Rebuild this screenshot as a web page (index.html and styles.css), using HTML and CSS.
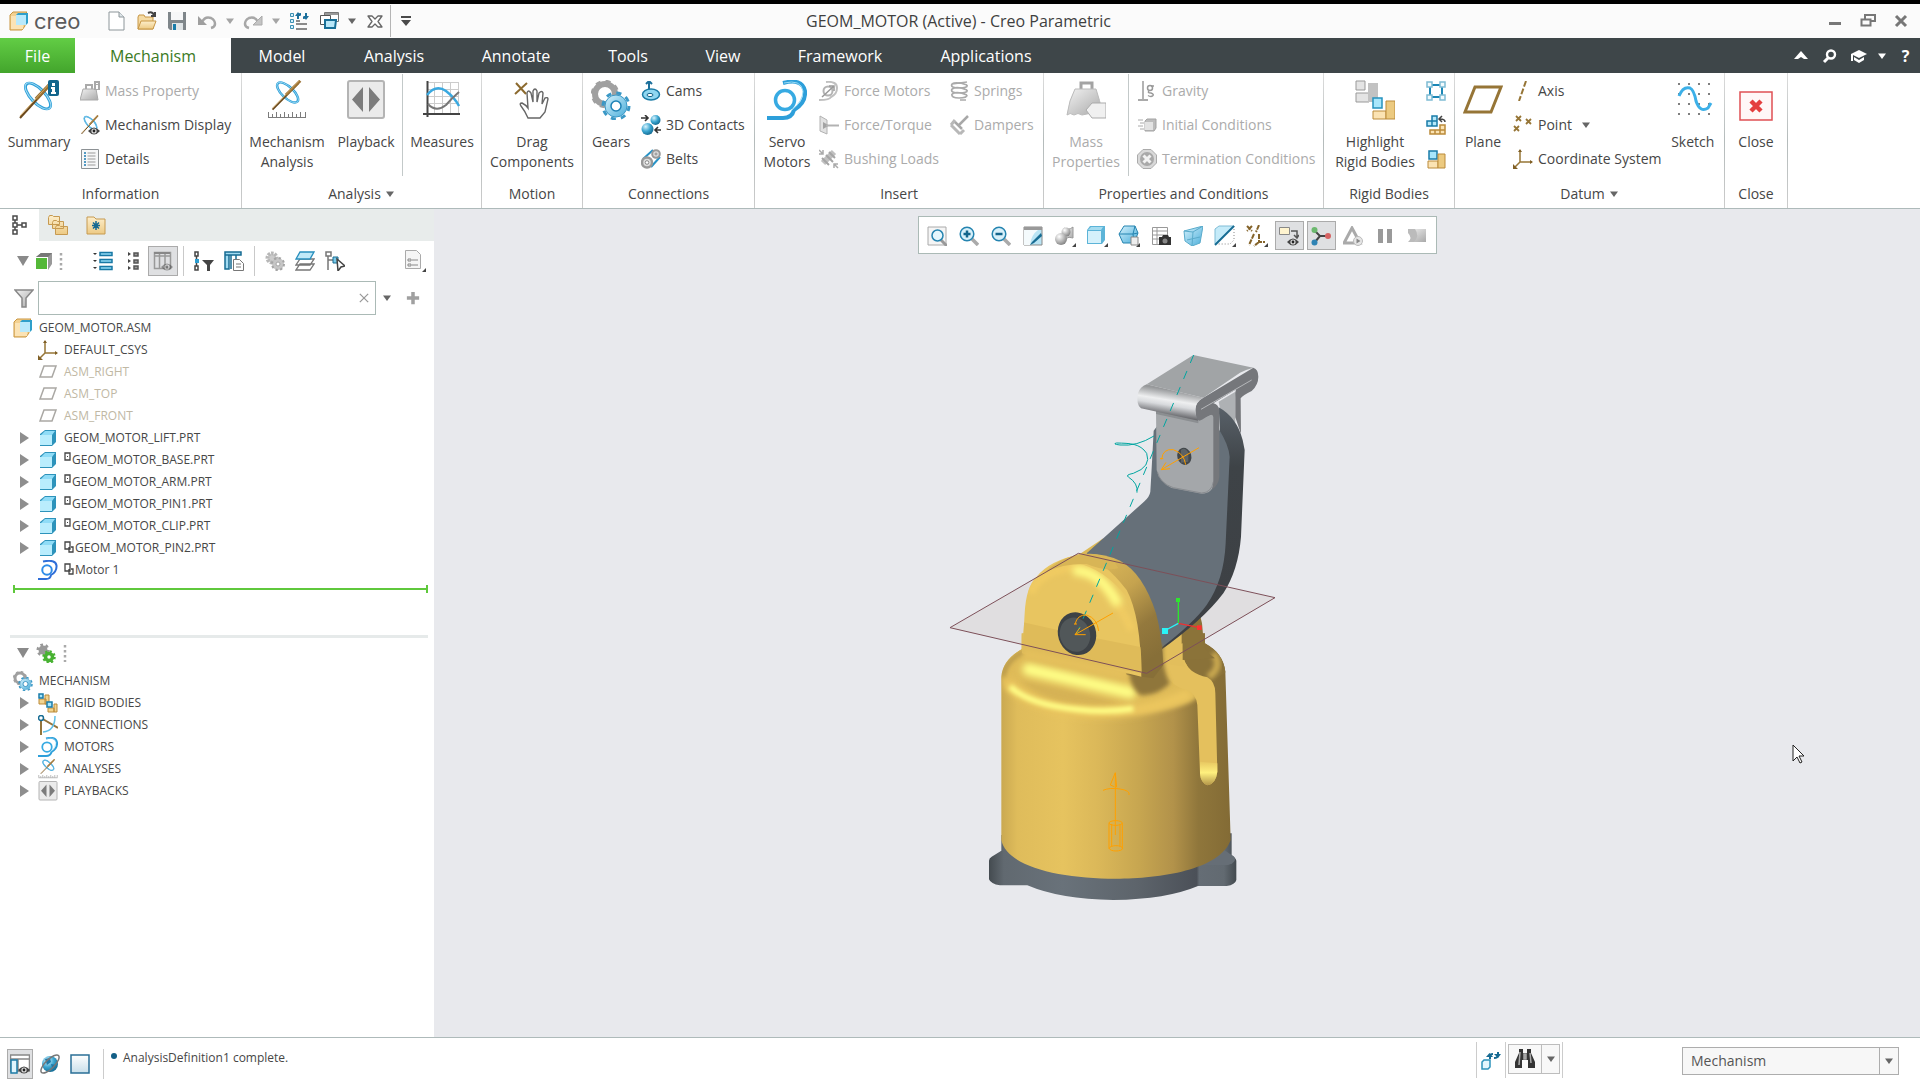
FILE: index.html
```html
<!DOCTYPE html>
<html lang="en">
<head>
<meta charset="utf-8">
<title>GEOM_MOTOR (Active) - Creo Parametric</title>
<link rel="stylesheet" href="styles.css">
</head>
<body>
<svg class="sprite" aria-hidden="true">
  <defs>
    <linearGradient id="gBlue" x1="0" y1="0" x2="1" y2="1"><stop offset="0" stop-color="#d5f1fc"/><stop offset="1" stop-color="#4aaeda"/></linearGradient>
    <linearGradient id="gGray" x1="0" y1="0" x2="1" y2="1"><stop offset="0" stop-color="#f2f2f2"/><stop offset="1" stop-color="#a9a9a9"/></linearGradient>
    <linearGradient id="gFolder" x1="0" y1="0" x2="0" y2="1"><stop offset="0" stop-color="#fdeecb"/><stop offset="1" stop-color="#edca84"/></linearGradient>
    <radialGradient id="gBall" cx=".35" cy=".3" r=".8"><stop offset="0" stop-color="#d8f3fd"/><stop offset=".5" stop-color="#3aa5d0"/><stop offset="1" stop-color="#0c5f86"/></radialGradient>
    <radialGradient id="gBallGray" cx=".35" cy=".3" r=".8"><stop offset="0" stop-color="#fff"/><stop offset="1" stop-color="#777"/></radialGradient>
  </defs>

  <symbol id="brand" viewBox="0 0 20 20"><path d="M1 4l3-3h14l-2 2v12l-3 4H1z" fill="#f3d191" stroke="#c9953f"/><path d="M2 5h12v13H2z" fill="#fbe3b5"/><path d="M7 4l2-2h10v10l-2 2H7z" fill="#2f9fca"/><path d="M7 4h10v10H7z" fill="#b9e9fb"/></symbol>
  <symbol id="new" viewBox="0 0 20 20"><path d="M2 1h10l5 5v13H2z" fill="#fff" stroke="#8d969a"/><path d="M12 1v5h5" fill="#dfe6e9" stroke="#8d969a"/></symbol>
  <symbol id="open" viewBox="0 0 20 20"><path d="M1 6l1-2h5l1 2h8v12H1z" fill="#f5dba4" stroke="#c79645"/><path d="M4 10h15l-3 8H1z" fill="url(#gFolder)" stroke="#c79645"/><path d="M11 2q4-2 6 2M18 1v4h-4" fill="none" stroke="#444" stroke-width="2"/></symbol>
  <symbol id="save" viewBox="0 0 20 20"><path d="M1 1h18v18H3l-2-2z" fill="#7f868a"/><path d="M4 1h12v8H4z" fill="#f6f7f8"/><path d="M5 12h11v7H5z" fill="#dfe4e6"/><path d="M6 13h3v6H6z" fill="#177ba8"/></symbol>
  <symbol id="undo" viewBox="0 0 20 20"><path d="M5 11q3-6 9-4 4 2 4 6 0 3-4 4" fill="none" stroke="#a5a5a5" stroke-width="2.500"/><path d="M1 5v9h9z" fill="#9f9f9f"/></symbol>
  <symbol id="redo" viewBox="0 0 20 20"><path d="M15 11q-3-6-9-4-4 2-4 6 0 3 4 4" fill="none" stroke="#a8a8a8" stroke-width="2.500"/><path d="M19 5v9h-9z" fill="#c4c4c4" stroke="#aaa"/></symbol>
  <symbol id="regen" viewBox="0 0 20 20"><path d="M1.500 2.500h3v3h-3zM1.500 8.500h3v3h-3zM1.500 14.500h3v3h-3z" fill="#d5f1fc" stroke="#3b8fb3"/><path d="M7 10h4M7 13h11M7 18h11" stroke="#8b8b8b" stroke-width="2"/><path d="M9 8V5q0-2 3-2M17 2v3q0 2-3 2" fill="none" stroke="#1b6f9b" stroke-width="2"/><path d="M6 5h6L9 1zM14 5h6l-3 4z" fill="#1b6f9b"/></symbol>
  <symbol id="windows" viewBox="0 0 20 20"><path d="M5.500 1.500h14v9h-14z" fill="#fff" stroke="#777"/><path d="M6 3h13" stroke="#999" stroke-width="2"/><path d="M1.500 4.500h10v9h-10z" fill="#fff" stroke="#555"/><path d="M6 9h11l-1 8H6z" fill="#b9e7f8" stroke="#176e97" stroke-width="2"/></symbol>
  <symbol id="closewin" viewBox="0 0 20 20"><path d="M3 5h4l3 3 3-3h4l-4 5.500 4 5.500h-4l-3-3-3 3H3l4-5.500z" fill="#fff" stroke="#666" stroke-width="1.300" stroke-linejoin="round"/></symbol>
  <symbol id="caret" viewBox="0 0 10 10"><path d="M1 2.500h8L5 8z" fill="currentColor"/></symbol>
  <symbol id="custom" viewBox="0 0 12 12"><path d="M1 1h10v2H1zM1 5h10l-5 6z" fill="#4a4a4a"/></symbol>
  <symbol id="min" viewBox="0 0 16 16"><path d="M2 9h12v3H2z" fill="#777"/></symbol>
  <symbol id="restore" viewBox="0 0 16 16"><path d="M5 6V2h10v6h-4M1.500 6.500h9v6h-9z" fill="none" stroke="#777" stroke-width="2"/></symbol>
  <symbol id="x" viewBox="0 0 16 16"><path d="M3 3l10 10M13 3L3 13" stroke="currentColor" stroke-width="3"/></symbol>
  <symbol id="up" viewBox="0 0 16 16"><path d="M1 11l7-8 7 8h-4L8 9l-3 2z" fill="#fff"/></symbol>
  <symbol id="find" viewBox="0 0 16 16"><circle cx="9" cy="6.500" r="4" fill="none" stroke="#fff" stroke-width="2.400"/><path d="M6 10l-4 4" stroke="#fff" stroke-width="3"/></symbol>
  <symbol id="cap" viewBox="0 0 16 16"><path d="M0 6l8-4 8 4-8 4z" fill="#fff"/><path d="M3 9l5 3 5-3v3l-5 3-5-3zM0 6h2v7H0z" fill="#fff"/></symbol>

  <symbol id="mech" viewBox="0 0 40 40"><ellipse cx="21" cy="16" rx="16.500" ry="7" transform="rotate(46 21 16)" fill="none" stroke="#2d9fd8" stroke-width="3"/><ellipse cx="21" cy="16" rx="17" ry="7" transform="rotate(46 21 16)" fill="none" stroke="#a4dcf4" stroke-width="1"/><path d="M34 4L3 38" stroke="#6b491c" stroke-width="2"/><path d="M36 1L19 19" stroke="#9a7032" stroke-width="3.500"/><path d="M35 1L3 36" stroke="#d0a866" stroke-width="1"/></symbol>
  <symbol id="summary" viewBox="0 0 40 40"><g transform="translate(-2 0)"><use href="#mech" width="40" height="40"/></g><rect x="29" y="0" width="11" height="16" rx="2" fill="#12658c"/><path d="M33 3h3v3h-3zM32 7h4v5h1v2h-5v-2h1V9h-1z" fill="#fff"/></symbol>
  <symbol id="mechan" viewBox="0 0 40 40"><g transform="translate(3 0) scale(.84 .78)"><use href="#mech" width="40" height="40"/></g><path d="M1 37.500h38M1.500 37v-5M5.500 37v-3M9.500 37v-5M13.500 37v-3M17.500 37v-5M21.500 37v-3M25.500 37v-5M29.500 37v-3M33.500 37v-5M38.500 37v-5" stroke="#7c7c7c" fill="none"/></symbol>
  <symbol id="eye" viewBox="0 0 12 8"><path d="M0 4q6-7 12 0-6 7-12 0z" fill="#444"/><circle cx="6" cy="4" r="2.600" fill="#ddd"/><circle cx="6" cy="4" r="1.400" fill="#222"/></symbol>
  <symbol id="mechdisp" viewBox="0 0 20 20"><use href="#mech" width="20" height="20"/><use href="#eye" x="8" y="12" width="12" height="8"/></symbol>
  <symbol id="massprop" viewBox="0 0 20 20"><path d="M3 8h13l2 11H0z" fill="url(#gGray)" stroke="#aaa"/><path d="M6 8V4h6v4" fill="none" stroke="#aaa" stroke-width="2"/><path d="M14 0h6v9h-6z" fill="#a9a9a9"/><path d="M17 2v1M17 4v4" stroke="#fff" stroke-width="2"/></symbol>
  <symbol id="details" viewBox="0 0 20 20"><path d="M1.500 .5h17v19h-17z" fill="#f6f7f8" stroke="#8c9194"/><path d="M4 4h2M4 7h2M4 10h2M4 13h2M4 16h2" stroke="#1c7bb0" stroke-width="1.500"/><path d="M7.500 4h8M7.500 7h8M7.500 10h8M7.500 13h8M7.500 16h8" stroke="#999"/></symbol>
  <symbol id="play" viewBox="0 0 40 40"><rect x="2" y="1" width="36" height="37" rx="2" fill="#ebebeb" stroke="#b4b4b4" stroke-width="2"/><path d="M17 7v25L6 19.500zM23 7v25l11-12.500z" fill="#7c7c7c"/></symbol>
  <symbol id="measures" viewBox="0 0 40 40"><path d="M6 2.500h31M6 9.500h31M6 16.500h31M6 23.500h31M12.500 2v32M20.500 2v32M28.500 2v32M36.500 2v32" stroke="#ccc"/><path d="M5.500 1v36M1 34h37" stroke="#444" stroke-width="2"/><path d="M5 15Q14 4 24 11q9 7 13 15" fill="none" stroke="#3aa9e0" stroke-width="2.500"/><path d="M6 24q8 9 18 1Q30 18 37 12" fill="none" stroke="#777" stroke-width="2"/></symbol>
  <symbol id="hand" viewBox="0 0 40 40"><path d="M4 3l10 11M15 3L3 14" stroke="#8c6a2f" stroke-width="2"/><path d="M16 38Q13 31 9 26q-2-3 1-3 4 2 6 5l-1-15q1-4 4 0l2 9V11q2-4 4 0v11l2-9q3-3 4 0l-1 11 3-6q3-1 3 1l-3 13-5 6z" fill="#fff" stroke="#666" stroke-width="1.400"/></symbol>
  <symbol id="gears" viewBox="0 0 40 40"><circle cx="14" cy="14" r="10" fill="none" stroke="#a0a0a0" stroke-width="6"/><circle cx="14" cy="14" r="12.700" fill="none" stroke="#a0a0a0" stroke-width="3" stroke-dasharray="5 5"/><circle cx="25" cy="26" r="13" fill="none" stroke="#3a98c6" stroke-width="3" stroke-dasharray="5.100 5.100"/><circle cx="25" cy="26" r="11" fill="url(#gBlue)" stroke="#3a98c6"/><circle cx="25" cy="26" r="5" fill="#fff" stroke="#1d82b5" stroke-width="1.500"/></symbol>
  <symbol id="gearsgreen" viewBox="0 0 20 20"><circle cx="7" cy="7" r="4.500" fill="#999" stroke="#999" stroke-width="4" stroke-dasharray="2.300 2.300"/><circle cx="13" cy="14" r="3.500" fill="#fff" stroke="#48b232" stroke-width="3.500"/><circle cx="13" cy="14" r="5.500" fill="none" stroke="#48b232" stroke-width="2.500" stroke-dasharray="2.150 2.150"/></symbol>
  <symbol id="gearsgray" viewBox="0 0 20 20"><circle cx="7" cy="7" r="4.500" fill="#ccc" stroke="#b7b7b7" stroke-width="4" stroke-dasharray="2.300 1"/><circle cx="13" cy="13" r="4" fill="#fff" stroke="#c6c6c6" stroke-width="4"/><circle cx="13" cy="13" r="6" fill="none" stroke="#a5a5a5" stroke-width="2" stroke-dasharray="2.350 2.350"/><circle cx="13" cy="13" r="2" fill="none" stroke="#a5a5a5"/></symbol>
  <symbol id="cams" viewBox="0 0 20 20"><path d="M8 0v9M5 3l3-3 3 3" stroke="#1b6f9b" stroke-width="2" fill="none"/><ellipse cx="10" cy="13.500" rx="8.500" ry="5.500" fill="#8fd7f1" stroke="#1b7ba6" stroke-width="1.500"/><ellipse cx="9" cy="14" rx="3" ry="1.600" fill="#fff" stroke="#156388"/></symbol>
  <symbol id="contacts" viewBox="0 0 20 20"><circle cx="14.500" cy="5" r="5" fill="url(#gBall)"/><circle cx="6.500" cy="14" r="6" fill="url(#gBall)"/><path d="M0 3h7M4 0l3 3-3 3M20 15h-6M17 12l-3 3 3 3" fill="none" stroke="#333" stroke-width="1.600"/></symbol>
  <symbol id="belts" viewBox="0 0 20 20"><path d="M2 10L12 1M10 18l9-10" stroke="#2793c7" stroke-width="2"/><circle cx="6" cy="13.500" r="5" fill="#ddd" stroke="#999" stroke-width="2.500"/><circle cx="15" cy="5" r="3.800" fill="#ddd" stroke="#999" stroke-width="2"/><circle cx="6" cy="13.500" r="1.800" fill="#fff" stroke="#888"/><circle cx="15" cy="5" r="1" fill="#fff" stroke="#888"/></symbol>
  <symbol id="servo" viewBox="0 0 40 40"><circle cx="18" cy="20" r="9.500" fill="none" stroke="#37aae2" stroke-width="3.500"/><path d="M16 3Q35-2 38 11q1 12-11 19Q25 38 16 38H0" fill="none" stroke="#2d9fda" stroke-width="4"/><path d="M17 3q17-4 19 8 0 10-11 19" fill="none" stroke="#9adcf6"/></symbol>
  <symbol id="servoBlue" viewBox="0 0 40 40"><circle cx="18" cy="20" r="9.500" fill="none" stroke="#2e8ce8" stroke-width="4"/><path d="M10 3Q35-2 37 11q1 12-11 19Q25 38 16 38H0" fill="none" stroke="#2e6ed8" stroke-width="4"/></symbol>
  <symbol id="forcemotor" viewBox="0 0 20 20"><circle cx="9" cy="10" r="4.500" fill="none" stroke="#b3b3b3" stroke-width="2"/><path d="M7 1q11-1 11 6 0 6-6 9-1 3-12 3" fill="none" stroke="#c0c0c0" stroke-width="2"/><path d="M3 16L15 5M10 5h5v5" fill="none" stroke="#999" stroke-width="1.500"/></symbol>
  <symbol id="torque" viewBox="0 0 20 20"><path d="M1 1l7 4v14l-7-3z" fill="#e2e2e2" stroke="#b2b2b2"/><path d="M4 7v7l6-3.500z" fill="#a3a3a3"/><path d="M7 10.500h13" stroke="#b2b2b2" stroke-width="2"/></symbol>
  <symbol id="bushing" viewBox="0 0 20 20"><path d="M4 14L15 3" stroke="#c0c0c0" stroke-width="6"/><path d="M3 9l7 7M7 6l7 7M10 3l6 6" stroke="#a5a5a5" stroke-width="2"/><path d="M0 1l4 4M4 1v4H0M19 19l-4-4M15 19v-4h4" fill="none" stroke="#aaa" stroke-width="1.500"/></symbol>
  <symbol id="springs" viewBox="0 0 20 20"><path d="M18 1L3 3M3 3q-2 4 7 4t8-3M3 8q-2 4 7 4t8-3M3 13q-1 4 7 4t8-3M3 3q4-3 15 1M3 8q5-3 15 1M3 13q5-3 15 1M17 19h-6" fill="none" stroke="#aaa" stroke-width="1.700"/></symbol>
  <symbol id="dampers" viewBox="0 0 20 20"><path d="M2 10l9 9M2 10l4-5M11 19l4-4" stroke="#b8b8b8" stroke-width="3" fill="none"/><path d="M6 7l7 7M10 10l9-9" stroke="#a8a8a8" stroke-width="2.500"/></symbol>
  <symbol id="masses" viewBox="0 0 40 40"><path d="M15 9V3h11v6" fill="none" stroke="#a3a3a3" stroke-width="3"/><path d="M9 9h21q4 12 6 22l-20 4q-4-3-8 0-4-3-7 0Q3 20 9 9z" fill="url(#gGray)" stroke="#bbb"/><path d="M20 30l6-7h14v15H26z" fill="#f0f0f0" stroke="#ababab"/></symbol>
  <symbol id="gravity" viewBox="0 0 20 20"><path d="M6 0v18" stroke="#b3b3b3" stroke-width="2"/><path d="M1 19h10" stroke="#aaa" stroke-width="2"/><circle cx="13" cy="7" r="2.500" fill="none" stroke="#999" stroke-width="1.500"/><path d="M14 5h3M12 10q-2 2 2 2 3 1 2 2.500-2 2-5 0" fill="none" stroke="#999" stroke-width="1.500"/></symbol>
  <symbol id="initial" viewBox="0 0 20 20"><path d="M1 5h5M3 8h4M1 11h5M3 14h4" stroke="#aaa"/><path d="M8 6l2-2h9v9l-2 3H8z" fill="#bcbcbc" stroke="#a3a3a3"/><path d="M8 7h8v8H8z" fill="#e3e3e3"/></symbol>
  <symbol id="term" viewBox="0 0 20 20"><path d="M6 .5h8L19.500 6v8L14 19.500H6L.5 14V6z" fill="#d9d9d9" stroke="#ababab"/><circle cx="10" cy="10" r="7" fill="#a9a9a9"/><path d="M6.500 6.500l7 7M13.500 6.500l-7 7" stroke="#f2f2f2" stroke-width="3"/></symbol>
  <symbol id="rigid" viewBox="0 0 40 40"><path d="M1 1h9v9H1zM1 13h13v9H1z" fill="#e4e4e4" stroke="#999"/><path d="M13 3h10v19H13z" fill="#c2c2c2"/><path d="M18 18h9v10h-9z" fill="#a8e6fb" stroke="#2592bf" stroke-width="1.500"/><path d="M18 31h13v8H18z" fill="#fbe3b3" stroke="#bb8b3a"/><path d="M31 21h9v18h-9z" fill="#ecca80" stroke="#bb8b3a"/></symbol>
  <symbol id="rb1" viewBox="0 0 20 20"><path d="M4 4h12v12H4z" fill="none" stroke="#1c87b6" stroke-width="2"/><path d="M1 1h5v5H1zM14 1h5v5h-5zM1 14h5v5H1zM14 14h5v5h-5z" fill="#f2fafd" stroke="#7fbcd4" stroke-width="1.500"/></symbol>
  <symbol id="rb2" viewBox="0 0 20 20"><path d="M1 6h5v5H1zM6 6h5v5H6zM6 1h5v5H6z" fill="#b7e9fa" stroke="#1a7ca9" stroke-width="1.500"/><path d="M4 15h5v4H4zM9 15h5v4H9zM14 15h5v4h-5zM14 10h5v5h-5z" fill="#fbe3b3" stroke="#bb8b3a" stroke-width="1.500"/><path d="M19 7q0-3-5-3M16 1l-3 3 3 3" fill="none" stroke="#444" stroke-width="1.500"/></symbol>
  <symbol id="rb3" viewBox="0 0 20 20"><path d="M3 2h8v8H3z" fill="#a8e6fb" stroke="#1a7ca9" stroke-width="1.500"/><path d="M2 12h10v7H2z" fill="#fbe3b3" stroke="#bb8b3a"/><path d="M12 5h7v14h-7z" fill="#ecca80" stroke="#bb8b3a"/></symbol>
  <symbol id="rb4" viewBox="0 0 20 20"><path d="M1 6h7v5H1zM7 2h4v9H7zM10 15h6v4h-6zM16 11h3v8h-3z" fill="#f2d48f" stroke="#bb8b3a"/><path d="M1 1h4v4H1zM9 9h5v5H9z" fill="#a8e6fb" stroke="#1a7ca9" stroke-width="1.500"/></symbol>
  <symbol id="plane" viewBox="0 0 40 30"><path d="M12 2h26l-10 25H2z" fill="none" stroke="#967536" stroke-width="3"/></symbol>
  <symbol id="plane2" viewBox="0 0 20 16"><path d="M6 2h12l-4 11H2z" fill="#fff" stroke="#aaa8a4" stroke-width="1.500"/></symbol>
  <symbol id="axis" viewBox="0 0 20 20"><path d="M13 0L6 20" stroke="#967536" stroke-width="2" stroke-dasharray="6 2"/></symbol>
  <symbol id="points" viewBox="0 0 20 20"><path d="M3 1l5 5M8 1L3 6M13 4l5 5M18 4l-5 5M1 11l5 5M6 11l-5 5" stroke="#967536" stroke-width="1.800"/></symbol>
  <symbol id="csys" viewBox="0 0 20 20"><path d="M7 1v12h12M7 13l-6 6" fill="none" stroke="#967536" stroke-width="1.500"/><path d="M5 3l2-3 2 3zM17 11l3 2-3 2zM0 15v5h5z" fill="#806026"/></symbol>
  <symbol id="sketch" viewBox="0 0 40 40"><path d="M5 4h2M15 4h2M25 4h2M35 4h2M5 14h2M15 14h2M25 14h2M35 14h2M5 24h2M15 24h2M25 24h2M35 24h2M5 34h2M15 34h2M25 34h2M35 34h2" stroke="#555" stroke-width="1.500"/><path d="M6 16Q10 6 17 8q4 2 6 13 4 12 12 7l3-5" fill="none" stroke="#3cb0e8" stroke-width="3"/></symbol>
  <symbol id="closebox" viewBox="0 0 34 30"><path d="M1 1h32v28H1z" fill="#fff7f7" stroke="#e05054" stroke-width="1.500"/><path d="M12 10l10 10M22 10L12 20" stroke="#e43e3e" stroke-width="4.500"/></symbol>

  <symbol id="treetab" viewBox="0 0 20 20"><path d="M3 1h4v4H3zM3 8h4v4H3zM3 15h4v4H3zM12 8h4v4h-4zM5 5v3M5 12v3M7 10h5" fill="none" stroke="#4b4b4b" stroke-width="1.500"/></symbol>
  <symbol id="folders" viewBox="0 0 20 20"><path d="M.5 2.500l1-2h3l1 1h6v8h-11zM4.500 7.500l1-2h3l1 1h6v7h-11zM7.500 12.500l1-2h3l1 1h7v8h-12z" fill="url(#gFolder)" stroke="#c69a51"/></symbol>
  <symbol id="favs" viewBox="0 0 20 20"><path d="M1 5V2h7l2 2h9v15H1z" fill="url(#gFolder)" stroke="#c69a51"/><path d="M10 6v9M6 10.500h8M7 7.500l6 6M13 7.500l-6 6" stroke="#176a92" stroke-width="1.500"/></symbol>
  <symbol id="tri" viewBox="0 0 12 12"><path d="M0 1h12L6 11z" fill="#8a8a8a"/></symbol>
  <symbol id="exp" viewBox="0 0 12 12"><path d="M2 0v12l9-6z" fill="#8e8e8e"/></symbol>
  <symbol id="gcube" viewBox="0 0 20 20"><path d="M2 6l5-4h11v11l-4 6V6z" fill="#999"/><path d="M2 6l5-4h11l-4 4z" fill="#777"/><path d="M2 7h11v11H2z" fill="#54b838"/></symbol>
  <symbol id="dots" viewBox="0 0 6 20"><path d="M3 2v17" stroke="#aaa" stroke-width="2.500" stroke-dasharray="2.500 2.500"/></symbol>
  <symbol id="list1" viewBox="0 0 20 20"><path d="M7 1.500h12v3H7zM7 8.500h12v3H7zM7 15.500h12v3H7z" fill="#8fd8f4" stroke="#1878a4" stroke-width="1.500"/><path d="M0 2h4L2 4zM0 9h4l-2 2zM0 16h4l-2 2z" fill="#333"/></symbol>
  <symbol id="list2" viewBox="0 0 20 20"><path d="M11 2h4v3h-4zM11 9h4v3h-4zM11 15h4v3h-4z" fill="#999" stroke="#555" stroke-width="1.500"/><path d="M5 1v4l3-2zM5 8v4l3-2zM5 15v4l3-2z" fill="#444"/></symbol>
  <symbol id="cols" viewBox="0 0 20 20"><path d="M1.500 1.500h16v16h-16zM1 5h16M6.500 1v17M12 1v17" fill="none" stroke="#999" stroke-width="1.500"/><path d="M1 2h16" fill="none" stroke="#888" stroke-width="2"/><use href="#eye" x="8" y="12" width="12" height="8" opacity=".5"/></symbol>
  <symbol id="treefilter" viewBox="0 0 20 20"><path d="M1 1h3v4H1zM1 15h3v4H1zM2.500 5v10" fill="none" stroke="#444" stroke-width="1.500"/><path d="M1 8h4v4H1z" fill="#2d9dcf"/><path d="M8 9h12l-4 5v6h-3v-6z" fill="#444"/></symbol>
  <symbol id="colset" viewBox="0 0 20 20"><path d="M1 1h16v3H1zM1 4h4v14H1zM7 4v14M12 4v5" fill="#a2dbf1" stroke="#176c93" stroke-width="1.500"/><path d="M9.500 8.500h6l4 4v7h-10zM12 13h5M12 16h5" fill="#fff" stroke="#777"/></symbol>
  <symbol id="layers" viewBox="0 0 20 20"><path d="M5 13h14l-4 6H1zM5 8h14l-4 6H1z" fill="#fff" stroke="#777" stroke-width="1.300"/><path d="M5 1h14l-4 7H1z" fill="#c0e9f8" stroke="#278ebd" stroke-width="1.300"/></symbol>
  <symbol id="treesel" viewBox="0 0 20 20"><path d="M1 1h5v4H1zM3 5v14M3 9h5" fill="none" stroke="#777" stroke-width="1.500"/><path d="M8 6h5v6H8z" fill="#7acbea" stroke="#176c93"/><path d="M12 8l8 7-4 1-3 4z" fill="#fff" stroke="#444" stroke-width="1.500"/></symbol>
  <symbol id="props" viewBox="0 0 22 22"><path d="M1.500 .5h11l4 4v14h-15z" fill="#f5f5f5" stroke="#aaa"/><path d="M4 9h3v2H4zM4 14h3v2H4zM8 10h6M8 15h6" fill="none" stroke="#888"/><path d="M22 18v4h-4z" fill="#444"/></symbol>
  <symbol id="funnel" viewBox="0 0 20 20"><path d="M1 2h18l-7 8v9H8v-9z" fill="url(#gGray)" stroke="#888" stroke-width="1.500"/></symbol>
  <symbol id="plus" viewBox="0 0 16 16"><path d="M8 1v14M1 8h14" stroke="#a0a0a0" stroke-width="4"/></symbol>
  <symbol id="thinx" viewBox="0 0 12 12"><path d="M1 1l10 10M11 1L1 11" stroke="#999" stroke-width="1.500"/></symbol>
  <symbol id="part" viewBox="0 0 20 20"><path d="M2 6l5-4h11v12l-4 4H2z" fill="#2d93bb"/><path d="M3 7l4-4h10l-3 4z" fill="#8fdcf7"/><path d="M2 7h12v10H2z" fill="#b9edfd"/></symbol>
  <symbol id="mk1" viewBox="0 0 8 10"><path d="M1 1h5v7H1z" fill="none" stroke="#444" stroke-width="1.300"/><path d="M3 4h1v1H3z" fill="#444"/></symbol>
  <symbol id="mk2" viewBox="0 0 10 12"><path d="M1 1h5v7H1zM5 6v5h4V6H7" fill="none" stroke="#444" stroke-width="1.300"/></symbol>
  <symbol id="conn" viewBox="0 0 20 20"><path d="M3 3v17M3 3l17 10" stroke="#94743a" stroke-width="2"/><path d="M17 1q0 15-12 16" fill="none" stroke="#5fbfe6" stroke-width="1.500"/><circle cx="3" cy="3" r="2.500" fill="#fff" stroke="#176c93" stroke-width="1.500"/></symbol>

  <symbol id="refit" viewBox="0 0 20 20"><path d="M1 1h18v18H1z" fill="#f5f5f5" stroke="#aaa"/><path d="M14 14l6 6" stroke="#999" stroke-width="3"/><circle cx="10.500" cy="9.500" r="5.500" fill="#e5f7fd" stroke="#2584b0" stroke-width="1.500"/></symbol>
  <symbol id="zin" viewBox="0 0 20 20"><path d="M13 13l6 6" stroke="#aaa" stroke-width="3.500"/><circle cx="8" cy="8" r="6.800" fill="#d7f0fa" stroke="#2584b0" stroke-width="1.500"/><path d="M8 4.500v7M4.500 8h7" stroke="#12658c" stroke-width="2.500"/></symbol>
  <symbol id="zout" viewBox="0 0 20 20"><path d="M13 13l6 6" stroke="#aaa" stroke-width="3.500"/><circle cx="8" cy="8" r="6.800" fill="#d7f0fa" stroke="#2584b0" stroke-width="1.500"/><path d="M4.500 8h7" stroke="#12658c" stroke-width="2.500"/></symbol>
  <symbol id="repaint" viewBox="0 0 20 20"><path d="M1 1h18v18H1z" fill="#b9e4f4" stroke="#888"/><path d="M1 1h18v3H1z" fill="#999"/><path d="M1 4h14Q8 9 7 19H1z" fill="#f4fafc"/><path d="M18 7l-9 9-2 3 4-2 8-7z" fill="#176c93"/></symbol>
  <symbol id="render" viewBox="0 0 22 22"><path d="M10 3q4 3 9-1v11q-4-2-8 1z" fill="url(#gGray)" stroke="#999"/><circle cx="12" cy="7" r="4.500" fill="url(#gBallGray)"/><circle cx="7" cy="14" r="6" fill="url(#gBallGray)"/><path d="M22 18v4h-4z" fill="#444"/></symbol>
  <symbol id="shade" viewBox="0 0 22 22"><path d="M1 5l3-4h15v14l-3 4H1z" fill="#5cb4d8"/><path d="M2 5l3-3h12l-2 3z" fill="#a5dcf0"/><path d="M1.500 5.500h14v13h-14z" fill="#d5f1fb" stroke="#5cb4d8"/><path d="M22 18v4h-4z" fill="#444"/></symbol>
  <symbol id="views" viewBox="0 0 22 22"><path d="M6 1h11l3 7-4 10H5L1 9z" fill="url(#gBlue)" stroke="#2584b0"/><path d="M1 9h14l5-1M15 9l1 9M15 9L17 1" fill="none" stroke="#2584b0"/><path d="M13 12h7v8h-7z" fill="#eee" stroke="#888"/><path d="M22 18v4h-4z" fill="#444"/></symbol>
  <symbol id="camera" viewBox="0 0 20 20"><path d="M1.500 1.500h15v17h-15zM1 5h15M1 9h15M1 13h7M6 1v17" fill="#fff" stroke="#999"/><path d="M8 11h3l1-2h5l1 2h2v8H8z" fill="#333"/><circle cx="14" cy="15" r="2.500" fill="#888"/></symbol>
  <symbol id="persp" viewBox="0 0 20 20"><path d="M1 5l19-5-3 17-8 3-7-5z" fill="url(#gBlue)" stroke="#5aabcb"/><path d="M1 5l9 1 10-6M10 6l-1 14M4 14l13-3" fill="none" stroke="#5aabcb"/></symbol>
  <symbol id="section" viewBox="0 0 22 22"><path d="M1 4l4-3h15L1 19z" fill="#c5ebf9" stroke="#80bdd6"/><path d="M20 1v14l-4 4H3" fill="none" stroke="#888" stroke-dasharray="1 2"/><path d="M20 1L1 20" stroke="#176c93" stroke-width="2"/><path d="M22 18v4h-4z" fill="#444"/></symbol>
  <symbol id="datums" viewBox="0 0 22 22"><path d="M1 1l5 5M6 1L1 6M13 0l-3 7M8 9l-5 11M13 9v8h6M13 17l-5 4" fill="none" stroke="#85642b" stroke-width="2" stroke-dasharray="5 1"/><path d="M22 18v4h-4z" fill="#444"/></symbol>
  <symbol id="annot" viewBox="0 0 20 20"><path d="M.5 1.500h10v7H.5z" fill="#fff4cf" stroke="#888"/><path d="M12 5h6v7M15 9l3 3 2-3" fill="none" stroke="#555" stroke-width="1.500"/><use href="#eye" x="8" y="12" width="12" height="8"/></symbol>
  <symbol id="spin" viewBox="0 0 20 20"><path d="M3 4l6 6-5 6M9 10h8" stroke="#444" stroke-width="2" fill="none"/><circle cx="3.500" cy="4" r="3" fill="#6cb86e"/><circle cx="3.500" cy="16.500" r="3" fill="#2f83b4"/><circle cx="17" cy="10" r="3" fill="#d66363"/></symbol>
  <symbol id="sim" viewBox="0 0 20 20"><path d="M9 2l8 15H1z" fill="none" stroke="#aaa" stroke-width="3"/><circle cx="15" cy="15" r="4.500" fill="#e6e6e6" stroke="#bbb"/><path d="M13.500 12.500v5l4-2.500z" fill="#888"/></symbol>
  <symbol id="pause" viewBox="0 0 20 20"><path d="M3 3h5v14H3zM12 3h5v14h-5z" fill="#9a9a9a"/></symbol>
  <symbol id="resume" viewBox="0 0 20 20"><path d="M1 3h18v13H5q6-5 0-9z" fill="url(#gGray)"/><path d="M1 3h7q5 7-1 13H1q5-4 0-9z" fill="#bbb"/></symbol>

  <symbol id="nav" viewBox="0 0 20 20"><path d="M.5 1h19v16H.5zM1 5h19M8 5v13" fill="#fff" stroke="#888" stroke-width="1.500"/><path d="M1 6h6v13H1z" fill="#e0f5fd" stroke="#1c7ba7" stroke-width="1.500"/><use href="#eye" x="8" y="12" width="12" height="8"/></symbol>
  <symbol id="globe" viewBox="0 0 20 20"><circle cx="10" cy="10" r="8" fill="url(#gBall)"/><path d="M5 5l5-1 1 4-4 3zM11 10l5 1-3 6z" fill="#1e79a8"/><ellipse cx="10" cy="10" rx="12" ry="4.500" transform="rotate(-45 10 10)" fill="none" stroke="#777" stroke-width="1.500"/></symbol>
  <symbol id="blank" viewBox="0 0 20 20"><path d="M1 1h18v18H1z" fill="url(#blankFill)" stroke="#2a6f96" stroke-width="1.500"/><linearGradient id="blankFill" x1="0" y1="0" x2="0" y2="1"><stop offset="0" stop-color="#fff"/><stop offset="1" stop-color="#c9dfea"/></linearGradient></symbol>
  <symbol id="regen2" viewBox="0 0 20 20"><path d="M1 12l2-2h6v7l-2 2H1z" fill="#e2f6fd" stroke="#2d93bb" stroke-width="1.500"/><path d="M9 9V6q0-2 3-2M17 2v3q0 3-4 3" fill="none" stroke="#176a92" stroke-width="2"/><path d="M5 7h7L8.500 3zM13 4h7l-3 4z" fill="#176a92"/></symbol>
  <symbol id="binoc" viewBox="0 0 20 20"><path d="M4 0h4v4h4V0h4v4l4 9v6h-7v-8H7v8H0v-6l4-9z" fill="#333"/><path d="M5 3l-1 13M15 4l1 10M9 5h2v5H9z" stroke="#aaa" fill="#999" stroke-width="1.500"/></symbol>
</svg>

<div class="app">
  <header class="titlebar">
    <div class="brand"><svg class="i20"><use href="#brand"/></svg><span>creo</span></div>
    <div class="qat">
      <button class="q" aria-label="New"><svg class="i20"><use href="#new"/></svg></button>
      <button class="q" aria-label="Open"><svg class="i20"><use href="#open"/></svg></button>
      <button class="q" aria-label="Save"><svg class="i20"><use href="#save"/></svg></button>
      <button class="q" aria-label="Undo"><svg class="i20"><use href="#undo"/></svg></button>
      <button class="q narrow faded" aria-label="Undo list"><svg class="i10"><use href="#caret"/></svg></button>
      <button class="q" aria-label="Redo"><svg class="i20"><use href="#redo"/></svg></button>
      <button class="q narrow faded" aria-label="Redo list"><svg class="i10"><use href="#caret"/></svg></button>
      <button class="q" aria-label="Regenerate"><svg class="i20"><use href="#regen"/></svg></button>
      <button class="q" aria-label="Windows"><svg class="i20"><use href="#windows"/></svg></button>
      <button class="q narrow" aria-label="Windows list"><svg class="i10"><use href="#caret"/></svg></button>
      <button class="q" aria-label="Close window"><svg class="i20"><use href="#closewin"/></svg></button>
      <button class="q customize" aria-label="Customize toolbar"><svg class="i12"><use href="#custom"/></svg></button>
    </div>
    <h1 class="title">GEOM_MOTOR (Active) - Creo Parametric</h1>
    <div class="winctl">
      <button aria-label="Minimize"><svg class="i16"><use href="#min"/></svg></button>
      <button aria-label="Restore"><svg class="i16"><use href="#restore"/></svg></button>
      <button aria-label="Close"><svg class="i16"><use href="#x"/></svg></button>
    </div>
  </header>

  <nav class="tabs">
    <button class="tab file">File</button>
    <button class="tab active">Mechanism</button>
    <button class="tab">Model</button>
    <button class="tab">Analysis</button>
    <button class="tab">Annotate</button>
    <button class="tab">Tools</button>
    <button class="tab">View</button>
    <button class="tab">Framework</button>
    <button class="tab">Applications</button>
    <div class="tabtools">
      <button aria-label="Collapse ribbon"><svg class="i16"><use href="#up"/></svg></button>
      <button aria-label="Search"><svg class="i16"><use href="#find"/></svg></button>
      <button aria-label="Learning"><svg class="i16"><use href="#cap"/></svg></button>
      <button class="slim" aria-label="Learning list"><svg class="i10"><use href="#caret"/></svg></button>
      <button class="help">?</button>
    </div>
  </nav>

  <div class="ribbon">
    <section class="group g-info">
      <div class="tools">
        <button class="big w80"><svg class="i40"><use href="#summary"/></svg><span>Summary</span></button>
        <div class="col">
          <button class="row" disabled><svg class="i20"><use href="#massprop"/></svg>Mass Property</button>
          <button class="row"><svg class="i20"><use href="#mechdisp"/></svg>Mechanism Display</button>
          <button class="row"><svg class="i20"><use href="#details"/></svg>Details</button>
        </div>
      </div>
      <h2>Information</h2>
    </section>
    <section class="group g-analysis">
      <div class="tools">
        <button class="big w90"><svg class="i40"><use href="#mechan"/></svg><span>Mechanism<br>Analysis</span></button>
        <button class="big w70"><svg class="i40"><use href="#play"/></svg><span>Playback</span></button>
        <button class="big split fill"><svg class="i40"><use href="#measures"/></svg><span>Measures</span></button>
      </div>
      <h2>Analysis <svg class="i10"><use href="#caret"/></svg></h2>
    </section>
    <section class="group g-motion">
      <div class="tools"><button class="big fill"><svg class="i40"><use href="#hand"/></svg><span>Drag<br>Components</span></button></div>
      <h2>Motion</h2>
    </section>
    <section class="group g-conn">
      <div class="tools">
        <button class="big w58"><svg class="i40"><use href="#gears"/></svg><span>Gears</span></button>
        <div class="col">
          <button class="row"><svg class="i20"><use href="#cams"/></svg>Cams</button>
          <button class="row"><svg class="i20"><use href="#contacts"/></svg>3D Contacts</button>
          <button class="row"><svg class="i20"><use href="#belts"/></svg>Belts</button>
        </div>
      </div>
      <h2>Connections</h2>
    </section>
    <section class="group g-insert">
      <div class="tools">
        <button class="big w64"><svg class="i40"><use href="#servo"/></svg><span>Servo<br>Motors</span></button>
        <div class="col w130">
          <button class="row" disabled><svg class="i20"><use href="#forcemotor"/></svg>Force Motors</button>
          <button class="row" disabled><svg class="i20"><use href="#torque"/></svg>Force/Torque</button>
          <button class="row" disabled><svg class="i20"><use href="#bushing"/></svg>Bushing Loads</button>
        </div>
        <div class="col">
          <button class="row" disabled><svg class="i20"><use href="#springs"/></svg>Springs</button>
          <button class="row" disabled><svg class="i20"><use href="#dampers"/></svg>Dampers</button>
        </div>
      </div>
      <h2>Insert</h2>
    </section>
    <section class="group g-props">
      <div class="tools">
        <button class="big w84" disabled><svg class="i40"><use href="#masses"/></svg><span>Mass<br>Properties</span></button>
        <div class="col split pad8">
          <button class="row" disabled><svg class="i20"><use href="#gravity"/></svg>Gravity</button>
          <button class="row" disabled><svg class="i20"><use href="#initial"/></svg>Initial Conditions</button>
          <button class="row" disabled><svg class="i20"><use href="#term"/></svg>Termination Conditions</button>
        </div>
      </div>
      <h2>Properties and Conditions</h2>
    </section>
    <section class="group g-rigid">
      <div class="tools">
        <button class="big w102"><svg class="i40"><use href="#rigid"/></svg><span>Highlight<br>Rigid Bodies</span></button>
        <div class="col">
          <button class="row" aria-label="Redefine bodies"><svg class="i20"><use href="#rb1"/></svg></button>
          <button class="row" aria-label="Reassign bodies"><svg class="i20"><use href="#rb2"/></svg></button>
          <button class="row" aria-label="Review bodies"><svg class="i20"><use href="#rb3"/></svg></button>
        </div>
      </div>
      <h2>Rigid Bodies</h2>
    </section>
    <section class="group g-datum">
      <div class="tools">
        <button class="big w58"><svg class="i40"><use href="#plane"/></svg><span>Plane</span></button>
        <div class="col">
          <button class="row"><svg class="i20"><use href="#axis"/></svg>Axis</button>
          <button class="row"><svg class="i20"><use href="#points"/></svg>Point <svg class="i10 list"><use href="#caret"/></svg></button>
          <button class="row"><svg class="i20"><use href="#csys"/></svg>Coordinate System</button>
        </div>
        <button class="big fill"><svg class="i40"><use href="#sketch"/></svg><span>Sketch</span></button>
      </div>
      <h2>Datum <svg class="i10"><use href="#caret"/></svg></h2>
    </section>
    <section class="group g-close">
      <div class="tools"><button class="big fill boxed"><svg class="i34"><use href="#closebox"/></svg><span>Close</span></button></div>
      <h2>Close</h2>
    </section>
  </div>

  <main class="work">
    <aside class="panel">
      <div class="ptabs">
        <button class="ptab on" aria-label="Model Tree"><svg class="i20"><use href="#treetab"/></svg></button>
        <button class="ptab" aria-label="Folder Browser"><svg class="i20"><use href="#folders"/></svg></button>
        <button class="ptab" aria-label="Favorites"><svg class="i20"><use href="#favs"/></svg></button>
      </div>
      <div class="ptools">
        <div class="lead">
          <button class="tw" aria-label="Collapse tree"><svg class="i12"><use href="#tri"/></svg></button>
          <button aria-label="Model Tree menu"><svg class="i20"><use href="#gcube"/></svg></button>
          <svg class="grip"><use href="#dots"/></svg>
        </div>
        <button aria-label="Expand all"><svg class="i20"><use href="#list1"/></svg></button>
        <button aria-label="Collapse all"><svg class="i20"><use href="#list2"/></svg></button>
        <button class="pressed" aria-label="Show columns"><svg class="i20"><use href="#cols"/></svg></button>
        <span class="vsep"></span>
        <button aria-label="Tree filters"><svg class="i20"><use href="#treefilter"/></svg></button>
        <button aria-label="Tree columns"><svg class="i20"><use href="#colset"/></svg></button>
        <span class="vsep"></span>
        <button aria-label="Settings"><svg class="i20"><use href="#gearsgray"/></svg></button>
        <button aria-label="Layers"><svg class="i20"><use href="#layers"/></svg></button>
        <button aria-label="Auto locate"><svg class="i20"><use href="#treesel"/></svg></button>
        <button class="last" aria-label="Tree options"><svg class="i22"><use href="#props"/></svg></button>
      </div>
      <div class="filter">
        <svg class="i20"><use href="#funnel"/></svg>
        <div class="field"><input type="text" aria-label="Filter tree"><button aria-label="Clear"><svg class="i10"><use href="#thinx"/></svg></button></div>
        <button class="drop" aria-label="Filter options"><svg class="i10"><use href="#caret"/></svg></button>
        <button aria-label="Add filter"><svg class="i14"><use href="#plus"/></svg></button>
      </div>
      <ul class="tree">
        <li class="root"><svg class="i20"><use href="#brand"/></svg>GEOM_MOTOR.ASM</li>
        <li class="leaf"><svg class="i20"><use href="#csys"/></svg>DEFAULT_CSYS</li>
        <li class="leaf off"><svg class="i20"><use href="#plane2"/></svg>ASM_RIGHT</li>
        <li class="leaf off"><svg class="i20"><use href="#plane2"/></svg>ASM_TOP</li>
        <li class="leaf off"><svg class="i20"><use href="#plane2"/></svg>ASM_FRONT</li>
        <li><svg class="tw"><use href="#exp"/></svg><svg class="i20"><use href="#part"/></svg>GEOM_MOTOR_LIFT.PRT</li>
        <li><svg class="tw"><use href="#exp"/></svg><svg class="i20"><use href="#part"/></svg><svg class="mk1"><use href="#mk1"/></svg>GEOM_MOTOR_BASE.PRT</li>
        <li><svg class="tw"><use href="#exp"/></svg><svg class="i20"><use href="#part"/></svg><svg class="mk1"><use href="#mk1"/></svg>GEOM_MOTOR_ARM.PRT</li>
        <li><svg class="tw"><use href="#exp"/></svg><svg class="i20"><use href="#part"/></svg><svg class="mk1"><use href="#mk1"/></svg>GEOM_MOTOR_PIN1.PRT</li>
        <li><svg class="tw"><use href="#exp"/></svg><svg class="i20"><use href="#part"/></svg><svg class="mk1"><use href="#mk1"/></svg>GEOM_MOTOR_CLIP.PRT</li>
        <li><svg class="tw"><use href="#exp"/></svg><svg class="i20"><use href="#part"/></svg><svg class="mk2"><use href="#mk2"/></svg>GEOM_MOTOR_PIN2.PRT</li>
        <li class="leaf"><svg class="i20"><use href="#servoBlue"/></svg><svg class="mk2"><use href="#mk2"/></svg>Motor 1</li>
      </ul>
      <div class="insertbar"></div>
      <div class="mhead">
        <button class="tw" aria-label="Collapse mechanism tree"><svg class="i12"><use href="#tri"/></svg></button>
        <button aria-label="Mechanism tree menu"><svg class="i20"><use href="#gearsgreen"/></svg></button>
        <svg class="grip"><use href="#dots"/></svg>
      </div>
      <ul class="tree">
        <li class="root"><svg class="i20"><use href="#gears"/></svg>MECHANISM</li>
        <li><svg class="tw"><use href="#exp"/></svg><svg class="i20"><use href="#rb4"/></svg>RIGID BODIES</li>
        <li><svg class="tw"><use href="#exp"/></svg><svg class="i20"><use href="#conn"/></svg>CONNECTIONS</li>
        <li><svg class="tw"><use href="#exp"/></svg><svg class="i20"><use href="#servo"/></svg>MOTORS</li>
        <li><svg class="tw"><use href="#exp"/></svg><svg class="i20"><use href="#mechan"/></svg>ANALYSES</li>
        <li><svg class="tw"><use href="#exp"/></svg><svg class="i20"><use href="#play"/></svg>PLAYBACKS</li>
      </ul>
    </aside>

    <section class="canvas">
      <svg class="scene" viewBox="434 209 1486 828" role="img" aria-label="Geometry motor assembly">
        <defs>
          <linearGradient id="body" x1="124" x2="812" y1="0" y2="0" gradientUnits="userSpaceOnUse"><stop offset="0" stop-color="#caa951"/><stop offset=".07" stop-color="#dfbc5b"/><stop offset=".27" stop-color="#e6c35f"/><stop offset=".42" stop-color="#dbb859"/><stop offset=".6" stop-color="#c7a650"/><stop offset=".75" stop-color="#b2924a"/><stop offset=".86" stop-color="#8f763b"/><stop offset="1" stop-color="#836b35"/></linearGradient>
          <linearGradient id="foot" x1="87" x2="829" y1="0" y2="0" gradientUnits="userSpaceOnUse"><stop offset="0" stop-color="#444b50"/><stop offset=".06" stop-color="#616970"/><stop offset=".3" stop-color="#69727a"/><stop offset=".6" stop-color="#5d646b"/><stop offset=".84" stop-color="#4b5058"/><stop offset=".85" stop-color="#656d75"/><stop offset=".95" stop-color="#626a71"/><stop offset="1" stop-color="#434a4f"/></linearGradient>
          <linearGradient id="side" x1="470" x2="670" y1="700" y2="960" gradientUnits="userSpaceOnUse"><stop offset="0" stop-color="#dab758"/><stop offset=".35" stop-color="#c5a34f"/><stop offset=".7" stop-color="#94793d"/><stop offset="1" stop-color="#876f38"/></linearGradient>
          <linearGradient id="roll" x1="690" x2="678" y1="180" y2="255" gradientUnits="userSpaceOnUse"><stop offset="0" stop-color="#97999b"/><stop offset=".4" stop-color="#eeeff0"/><stop offset=".6" stop-color="#d8dadd"/><stop offset="1" stop-color="#68696d"/></linearGradient>
          <linearGradient id="armSide" x1="0" x2="0" y1="230" y2="950" gradientUnits="userSpaceOnUse"><stop offset="0" stop-color="#596169"/><stop offset=".25" stop-color="#3e4347"/><stop offset="1" stop-color="#3d4044"/></linearGradient>
          <linearGradient id="slotEnd" x1="0" x2="0" y1="360" y2="436" gradientUnits="userSpaceOnUse"><stop offset="0" stop-color="#e4c15d"/><stop offset=".5" stop-color="#fff07e"/><stop offset="1" stop-color="#b39549"/></linearGradient>
          <filter id="soft6" x="-50%" y="-60%" width="200%" height="220%"><feGaussianBlur stdDeviation="7"/></filter>
          <filter id="soft12" x="-50%" y="-60%" width="200%" height="220%"><feGaussianBlur stdDeviation="11"/></filter>
          <clipPath id="bodyClip"><path d="M124 110Q128 60 185 28V-20H735V10Q790 40 796 95L812 600C780 690 600 716 468 716C300 716 140 680 124 600Z"/></clipPath>
          <clipPath id="faceClip"><path d="M247 970L254 850Q258 770 290 740Q330 705 410 700Q490 715 560 800Q603 880 606 1030Z"/></clipPath>
        </defs>
        <path d="M950 628L1078 553 1275 598 1147 673z" fill="#e0dee0"/>
        <g transform="translate(960 640) scale(.33333)">
          <path d="M124 585V632L95 650Q87 655 87 662V718Q92 732 120 736H202Q300 778 460 780Q620 778 714 738H800Q826 734 829 720V662Q828 655 815 645V580Z" fill="url(#foot)"/>
          <path d="M713 676L790 628 822 650Q834 665 805 675Z" fill="#666e76"/>
          <path d="M124 110Q128 60 185 28V-20H735V10Q790 40 796 95L812 600C780 690 600 716 468 716C300 716 140 680 124 600Z" fill="url(#body)"/>
          <g clip-path="url(#bodyClip)">
            <path d="M124 110Q140 220 430 230Q640 220 711 175L720 60 650 -20H180Z" fill="#dfbb59" filter="url(#soft6)"/>
            <path d="M180 122Q300 140 480 190Q400 205 290 185Q220 160 180 122Z" fill="#d6b255" filter="url(#soft6)"/>
            <path d="M140 125Q200 195 340 212Q470 228 580 200Q650 180 690 160" fill="none" stroke="#edc75f" stroke-width="30" filter="url(#soft12)"/>
            <path d="M150 140Q210 195 350 208Q440 218 520 206" fill="none" stroke="#ffff86" stroke-width="17" filter="url(#soft6)"/>
            <path d="M205 88L510 158" stroke="#ffff86" stroke-width="36" filter="url(#soft12)" stroke-linecap="round"/>
            <path d="M130 110Q135 65 188 35" fill="none" stroke="#b59648" stroke-width="12" filter="url(#soft6)"/>
            <path d="M668-20V30Q665 70 710 110L770 115 800 95 780 40 735 10V-20Z" fill="#8a7239"/>
            <path d="M760 40Q790 80 745 112" fill="none" stroke="#c9a850" stroke-width="20" filter="url(#soft6)"/>
          </g>
          <path d="M606 30L668-24V30Q668 70 695 92Q715 106 742 112Q766 125 766 160L772 395Q768 430 743 436Q722 430 720 400L712 195Q708 160 680 150Q640 140 622 110Q608 90 606 30Z" fill="#e4c05d"/>
          <path d="M720 365L772 370V395Q768 430 743 436Q722 430 720 400Z" fill="url(#slotEnd)"/>
        </g>
        <g transform="translate(940 330) scale(.33333)">
          <path d="M415 675L490 625V690Z" fill="#dbb857"/>
          <path d="M668 960L780 855 786 880 792 945Q796 965 825 985L728 990V940Z" fill="#8b7339"/>
          <path d="M668 950L725 905V990L735 1010 668 1000Z" fill="#e2be5c"/>
          <path d="M836 215L886 185V280L860 330Z" fill="#aeb1b4"/>
          <path d="M836 232Q890 262 908 330L914 360 903 620Q895 720 850 790Q790 870 660 962V930L840 300Z" fill="url(#armSide)"/>
          <path d="M650 290L641 302Q636 400 631 485Q629 500 612 515L440 670 600 900 662 955Q760 880 800 825Q852 750 857 640L869 380Q866 345 838 300L830 240Z" fill="#667079"/>
          <path d="M600 960L668 940Q666 1020 690 1060Q650 1100 600 1095Q560 1060 570 1000Z" fill="#8f763b" filter="url(#soft6)"/>
          <path d="M410 676Q470 662 540 692Q610 730 648 850Q665 910 670 1005L640 1045 560 1035Z" fill="url(#side)"/>
          <path d="M247 970L254 850Q258 770 290 740Q330 690 425 672Q490 690 560 780Q603 860 604 1040L400 990Z" fill="#e8c560"/>
          <g clip-path="url(#faceClip)">
            <path d="M240 875L420 915 605 952V1030H240Z" fill="#dfbb59"/>
            <path d="M272 790Q300 720 410 712Q500 740 575 900" fill="none" stroke="#f0cb62" stroke-width="24" filter="url(#soft6)"/>
            <path d="M400 722Q450 722 485 755Q515 785 535 825" fill="none" stroke="#ffff86" stroke-width="28" filter="url(#soft12)"/>
            <path d="M600 860V1060" stroke="#a88a43" stroke-width="26" filter="url(#soft6)"/>
          </g>
          <path d="M255 972L560 1035" stroke="#e4c05c" stroke-width="26" filter="url(#soft6)"/>
          <path d="M315 727Q350 690 415 673Q480 668 520 690L535 715Q495 725 440 702Q370 700 315 727Z" fill="#d8b556"/>
          <ellipse cx="411" cy="911" rx="57" ry="65" transform="rotate(-18 411 911)" fill="#3d4246"/>
          <ellipse cx="405" cy="914" rx="45" ry="52" transform="rotate(-18 405 914)" fill="#515759"/>
          <path d="M648 240L775 270 822 250V455Q820 490 785 491L695 474Q655 455 650 420Z" fill="#a4a7aa"/>
          <path d="M790 203Q767 215 766 240Q766 265 778 272Q785 270 800 260Q820 248 820 262V450Q820 470 815 480Q836 465 838 440V240Q834 222 820 220L888 178Q884 190 886 202V262L903 312 902 205Q908 196 935 183Q955 165 955 140Q955 118 940 113Z" fill="#75777b"/>
          <path d="M648 240L775 270V280L648 252Z" fill="#8b8e91"/>
          <path d="M760 75L940 113Q920 118 900 128L790 203 620 163Z" fill="#a1a4a6"/>
          <path d="M620 163Q600 170 594 190Q588 225 603 235L775 272Q765 255 766 235Q768 212 790 203Z" fill="url(#roll)"/>
          <path d="M783 238L935 150" stroke="#b5b7ba" stroke-width="3"/>
          <path d="M652 425Q660 460 700 473L785 489Q815 488 820 455" fill="none" stroke="#7b7f83" stroke-width="2"/>
          <ellipse cx="733" cy="379" rx="21" ry="26" transform="rotate(-15 733 379)" fill="#42474b"/>
          <path d="M723 398V360Q735 350 745 368V395Z" fill="#5c6265"/>
          <path d="M30 893L415 670 1005 803 620 1030Z" fill="none" stroke="#7c4f58" stroke-width="3"/>
          <path d="M761 75L410 912" stroke="#00a5a0" stroke-width="3" stroke-dasharray="26 26"/>
          <path d="M642 318Q590 350 540 345Q515 342 530 339C570 340 600 340 620 370Q635 410 580 430Q555 435 565 441Q595 460 591 488" fill="none" stroke="#00a5a0" stroke-width="3"/>
          <g fill="none" stroke="#ffa000" stroke-width="3">
            <path d="M777 353L664 419 678 397M664 419L690 416M665 388Q668 355 700 359Q732 370 737 404M660 386H670"/>
            <path d="M519 849L405 914 420 893M405 914L437 914M405 883Q412 853 440 855Q472 865 476 903M402 882H411"/>
            <path d="M523 1370L511 1365 526 1328 530 1372M526 1330V1515M489 1381Q510 1372 540 1377Q572 1382 567 1395M507 1480V1556M547 1480V1556M515 1482V1550M540 1482V1550"/>
            <ellipse cx="527" cy="1479" rx="20" ry="7"/><ellipse cx="528" cy="1555" rx="20" ry="8"/>
          </g>
          <path d="M715 880V812" stroke="#2ee62e" stroke-width="4"/><path d="M708 804h12v12h-12z" fill="#2ee62e"/>
          <path d="M715 880L775 892" stroke="#f03030" stroke-width="4"/><path d="M771 886h14v14h-14z" fill="#ff3030"/>
          <path d="M715 880L678 900" stroke="#29f3f8" stroke-width="4"/><path d="M666 894h18v18h-18z" fill="#29f3f8"/>
        </g>
        <path d="M1793 745v16l4-4 3 6 2-1-3-6h5z" fill="#fff" stroke="#222"/>
      </svg>
      <div class="gtools">
        <button aria-label="Refit"><svg class="i20"><use href="#refit"/></svg></button>
        <button aria-label="Zoom In"><svg class="i20"><use href="#zin"/></svg></button>
        <button aria-label="Zoom Out"><svg class="i20"><use href="#zout"/></svg></button>
        <button aria-label="Repaint"><svg class="i20"><use href="#repaint"/></svg></button>
        <button aria-label="Rendering Options"><svg class="i22"><use href="#render"/></svg></button>
        <button aria-label="Display Style"><svg class="i22"><use href="#shade"/></svg></button>
        <button aria-label="Saved Orientations"><svg class="i22"><use href="#views"/></svg></button>
        <button aria-label="View Manager"><svg class="i20"><use href="#camera"/></svg></button>
        <button aria-label="Perspective View"><svg class="i20"><use href="#persp"/></svg></button>
        <button aria-label="Section"><svg class="i22"><use href="#section"/></svg></button>
        <button aria-label="Datum Display Filters"><svg class="i22"><use href="#datums"/></svg></button>
        <button class="pressed" aria-label="Annotation Display"><svg class="i20"><use href="#annot"/></svg></button>
        <button class="pressed" aria-label="Spin Center"><svg class="i20"><use href="#spin"/></svg></button>
        <button aria-label="Simulate"><svg class="i20"><use href="#sim"/></svg></button>
        <button aria-label="Pause"><svg class="i20"><use href="#pause"/></svg></button>
        <button aria-label="Resume"><svg class="i20"><use href="#resume"/></svg></button>
      </div>
    </section>
  </main>

  <footer class="status">
    <div class="stools">
      <button class="pressed" aria-label="Navigator"><svg class="i20"><use href="#nav"/></svg></button>
      <button aria-label="Browser"><svg class="i20"><use href="#globe"/></svg></button>
      <button aria-label="Full screen"><svg class="i20"><use href="#blank"/></svg></button>
    </div>
    <p class="msg"><i></i>AnalysisDefinition1 complete.</p>
    <button class="regen" aria-label="Regeneration status"><svg class="i20"><use href="#regen2"/></svg></button>
    <div class="search">
      <button aria-label="Find"><svg class="i20"><use href="#binoc"/></svg></button>
      <button class="drop" aria-label="Find options"><svg class="i10"><use href="#caret"/></svg></button>
    </div>
    <div class="mode">
      <select aria-label="Selection filter"><option>Mechanism</option></select>
      <svg class="i10"><use href="#caret"/></svg>
    </div>
  </footer>
</div>
</body>
</html>
```
FILE: styles.css
```css
* { box-sizing: border-box; }
body {
  margin: 0;
  font: 14px/20px "Open Sans", "Noto Sans", sans-serif;
  color: #464646;
  background: #fff;
}
button {
  margin: 0;
  padding: 0;
  border: 0;
  background: none;
  font: inherit;
  color: inherit;
  display: flex;
  align-items: center;
  justify-content: center;
}
h1, h2, p, ul { margin: 0; padding: 0; font-weight: 400; }
ul { list-style: none; }
svg { flex: none; display: block; }
.sprite { position: absolute; width: 0; height: 0; }
.i10 { width: 10px; height: 10px; color: #666; }
.i12 { width: 12px; height: 12px; }
.i14 { width: 14px; height: 14px; }
.i16 { width: 16px; height: 16px; }
.i20 { width: 20px; height: 20px; }
.i22 { width: 22px; height: 22px; }
.i34 { width: 34px; height: 30px; }
.i40 { width: 40px; height: 40px; }

.app {
  min-height: 100vh;
  display: flex;
  flex-direction: column;
  border-top: 4px solid #000;
}

/* title bar */
.titlebar {
  height: 34px;
  display: grid;
  grid-template-columns: 1fr auto 1fr;
  grid-template-areas: "left title right";
  align-items: center;
  background: #fbfbfb;
  padding-right: 3px;
}
.brand, .qat { grid-area: left; display: flex; align-items: center; }
.brand { padding-left: 9px; gap: 5px; font: 22px/30px Inter, sans-serif; color: #5b5b5b; justify-self: start; }
.qat { padding-left: 102px; justify-self: start; }
.q { width: 30px; height: 32px; }
.q.narrow { width: 16px; }
.q.faded .i10 { color: #a5a5a5; }
.q.customize { border-left: 1px solid #b5b5b5; }
.title { grid-area: title; font-size: 16px; color: #3f3f3f; }
.winctl { grid-area: right; justify-self: end; display: flex; color: #777; }
.winctl button { width: 33px; height: 32px; }

/* ribbon tabs */
.tabs { height: 35px; display: flex; background: #3e4649; color: #fff; }
.tab { font-size: 16px; padding: 0; }
.tab.file { width: 75px; background: linear-gradient(#62cd45, #43a52c); }
.tab.active { width: 156px; background: #fff; color: #3b7a24; }
.tab:nth-child(3) { width: 102px; }
.tab:nth-child(4) { width: 122px; }
.tab:nth-child(5) { width: 122px; }
.tab:nth-child(6) { width: 102px; }
.tab:nth-child(7) { width: 88px; }
.tab:nth-child(8) { width: 146px; }
.tab:nth-child(9) { width: 146px; }
.tabtools { margin-left: auto; display: flex; }
.tabtools button { width: 29px; }
.tabtools .slim { width: 18px; }
.tabtools .i10 { color: #fff; }
.tabtools .help { font-size: 16px; font-weight: 700; }

/* ribbon */
.ribbon { display: flex; background: #fff; border-bottom: 1px solid #aebaba; height: 136px; }
.group {
  flex: none;
  display: flex;
  flex-direction: column;
  padding-top: 1px;
  border: 0 solid;
  border-right-width: 1px;
  border-image: linear-gradient(#ddd, #b4bbbb 50%, #ccc) 1;
}
.g-info { width: 242px; }
.g-analysis { width: 240px; }
.g-motion { width: 101px; }
.g-conn { width: 172px; }
.g-insert { width: 289px; }
.g-props { width: 280px; }
.g-rigid { width: 131px; }
.g-datum { width: 270px; }
.g-close { width: 63px; }
.tools { display: flex; height: 102px; }
.group h2 {
  display: flex;
  align-items: center;
  justify-content: center;
  gap: 4px;
  font-size: 14px;
  line-height: 20px;
  padding-top: 8px;
}
.big { flex-direction: column; justify-content: flex-start; gap: 12px; padding-top: 6px; flex: none; white-space: nowrap; }
.big.fill { flex: 1; }
.big.boxed { padding-top: 17px; gap: 11px; }
.w58 { width: 58px; }
.w64 { width: 64px; }
.w70 { width: 70px; }
.w80 { width: 80px; }
.w84 { width: 84px; }
.w90 { width: 90px; }
.w102 { width: 102px; }
.w130 { width: 130px; }
.w70, .w80, .w58 { padding-right: 2px; }
.col { flex: none; }
.split { border-left: 1px solid #c3c9c9; }
.pad8 { padding-left: 8px; }
.row { height: 34px; gap: 5px; white-space: nowrap; }
.row .list { margin-left: 4px; }
button:disabled { color: #ababab; }

/* work area */
.work { flex: 1; display: flex; min-height: 0; background: #e8e9ed; }
.panel { width: 434px; flex: none; background: #fff; }
.ptabs { display: flex; height: 32px; background: #e8eceb; }
.ptab { width: 38px; }
.ptab.on { width: 39px; background: #fff; }
.ptools, .lead, .mhead { display: flex; align-items: center; }
.ptools { height: 40px; gap: 10px; padding: 0 8px 0 16px; }
.lead { gap: 4px; width: 67px; }
.ptools .last { margin-left: auto; }
.lead .tw, .mhead .tw { width: 14px; }
.grip { width: 6px; height: 20px; }
.pressed { background: #dfe0e2; border: 1px solid #ababab; }
.ptools .pressed { width: 30px; height: 30px; margin: 0 -5px; }
.vsep { width: 1px; height: 30px; background: #c9c9c9; }
.filter { display: flex; align-items: center; height: 34px; padding-left: 14px; }
.field { display: flex; align-items: center; width: 338px; height: 34px; margin-left: 4px; border: 1px solid #abbab6; padding-right: 6px; }
.field input { flex: 1; min-width: 0; height: 30px; border: 0; outline: 0; padding: 0 6px; font: inherit; }
.filter .drop { width: 22px; margin-right: 8px; }
.tree { font-size: 12px; line-height: 22px; padding: 0 6px 0 18px; }
.filter + .tree { padding-top: 2px; }
.tree li { display: flex; align-items: center; height: 22px; gap: 6px; color: #474747; }
.tree .root { margin-left: -5px; }
.tree .tw { width: 12px; height: 12px; margin-right: 2px; }
.tree .leaf { padding-left: 20px; }
.tree .off { color: #c0b8a4; }
.mk1 { width: 8px; height: 10px; margin: 0 -6px 6px 0; }
.mk2 { width: 10px; height: 12px; margin: 0 -5px 2px 0; }
.insertbar { height: 2px; margin: 7px 6px 45px 13px; background: #5fc83c; }
.insertbar::before, .insertbar::after { content: ""; display: block; width: 2px; height: 8px; background: #5fc83c; margin-top: -3px; float: left; }
.insertbar::after { float: right; }
.mhead { margin: 0 6px 0 10px; border-top: 3px solid #e6eaea; padding: 5px 0 7px 6px; height: 35px; gap: 6px; }

/* graphics area */
.canvas { flex: 1; position: relative; min-width: 0; display: flex; justify-content: center; align-items: flex-start; padding-top: 7px; }
.scene { position: absolute; inset: 0; width: 100%; height: 100%; }
.gtools { position: relative; display: flex; gap: 3px; padding: 4px 4px 3px; border: 1px solid #abbab6; background: #fff; }
.gtools button { width: 29px; height: 29px; }

/* status bar */
.status { height: 43px; display: flex; border-top: 1px solid #aebaba; background: #fff; padding-right: 21px; }
.stools { display: flex; align-items: center; gap: 4px; margin: 11px 0 0 7px; height: 30px; padding-right: 10px; border-right: 1px solid #ccc; }
.stools button { width: 26px; height: 30px; }
.msg { font-size: 12px; line-height: 20px; padding-top: 10px; margin: 0 auto 0 7px; display: flex; gap: 6px; }
.msg i { width: 6px; height: 6px; border-radius: 3px; background: #135f87; margin-top: 5px; }
.regen { width: 30px; height: 36px; margin-top: 4px; border: solid #ccc; border-width: 0 1px; }
.search { display: flex; padding: 2px; height: 36px; margin: 4px 119px 0 0; border-right: 1px solid #ccc; }
.search button { width: 34px; border: 1px solid #bdbdbd; background: #f8f8f8; height: 30px; }
.search .drop { width: 18px; border-left: 0; }
.mode { position: relative; width: 217px; height: 28px; margin-top: 9px; }
.mode select { appearance: none; width: 100%; height: 100%; border: 1px solid #adadad; border-radius: 0; background: linear-gradient(#adadad, #adadad) right 18px top / 1px 100% no-repeat #f7f7f7; font: inherit; color: #555; padding: 0 8px; }
.mode .i10 { position: absolute; right: 5px; top: 9px; pointer-events: none; }
```
